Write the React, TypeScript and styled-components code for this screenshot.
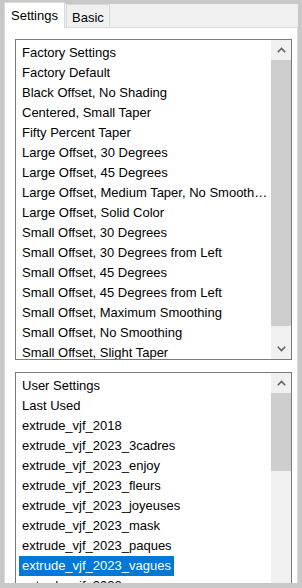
import React from "react";
import styled, { createGlobalStyle } from "styled-components";

const Global = createGlobalStyle`
  html, body { margin: 0; padding: 0; background: #c8c8c8; }
  body {
    width: 302px; height: 588px; overflow: hidden;
    font-family: "Liberation Sans", Arial, sans-serif; font-size: 13px; color: #000;
  }
`;

const Frame = styled.div`
  width: 302px; height: 588px; box-sizing: border-box;
  padding: 2px 4px 5px 4px; background: #c8c8c8;
  display: flex; flex-direction: column; overflow: hidden;
`;

const TabStrip = styled.div`
  display: flex; align-items: flex-end; height: 25px; flex: none;
  background: linear-gradient(to bottom, #c8c8c8 0 2px, #f0f0f0 2px);
  position: relative; z-index: 1;
`;

const Tab = styled.div<{ $active?: boolean }>`
  box-sizing: border-box;
  height: ${(p) => (p.$active ? "26px" : "23px")};
  margin-bottom: ${(p) => (p.$active ? "-1px" : "0")};
  padding: 0 ${(p) => (p.$active ? "6px" : "5px")};
  margin-left: ${(p) => (p.$active ? "0" : "1px")};
  background: ${(p) => (p.$active ? "#ffffff" : "#f0f0f0")};
  border: 1px solid #d9d9d9; border-bottom: none;
  display: flex; align-items: center;
  padding-top: ${(p) => (p.$active ? "0" : "3px")};
  font-size: 13px; line-height: 16px; color: #000; white-space: nowrap;
`;

const Panel = styled.div`
  flex: 1; min-height: 0; background: #ffffff;
  border: 1px solid #d9d9d9; border-bottom: none;
  padding: 11px 5px 0 10px;
  display: flex; flex-direction: column; gap: 12px; overflow: hidden;
`;

const ListBox = styled.div<{ $h: number }>`
  flex: none; height: ${(p) => p.$h}px; box-sizing: border-box;
  border: 1px solid #7a7a7a; background: #fff;
  display: flex;
`;

const Items = styled.div`
  flex: 1; min-width: 0; padding-top: 3px; overflow: hidden;
`;

const Row = styled.div`
  height: 20px; padding-left: 3px; display: flex; align-items: stretch;
  min-width: 0;
`;

const Label = styled.span<{ $sel?: boolean }>`
  display: block; padding: 0 3px; line-height: 20px; height: 20px;
  white-space: nowrap; overflow: hidden; text-overflow: ellipsis; min-width: 0;
  background: ${(p) => (p.$sel ? "#0078d7" : "transparent")};
  color: ${(p) => (p.$sel ? "#ffffff" : "#000000")};
`;

const ScrollBar = styled.div`
  flex: none; width: 20px; background: #f0f0f0;
  display: flex; flex-direction: column;
`;

const ArrowButton = styled.div`
  flex: none; height: 20px; display: flex; align-items: center; justify-content: center;
`;

const Track = styled.div`
  flex: 1; min-height: 0; display: flex; flex-direction: column;
`;

const Thumb = styled.div<{ $h: number }>`
  flex: none; height: ${(p) => p.$h}px; background: #cdcdcd;
`;

const Chevron = ({ up }: { up?: boolean }) => (
  <svg width="9" height="6" viewBox="0 0 9 6">
    <path
      d={up ? "M0.8 5.2 L4.5 1.5 L8.2 5.2" : "M0.8 0.8 L4.5 4.5 L8.2 0.8"}
      fill="none"
      stroke="#606060"
      strokeWidth="1.6"
    />
  </svg>
);

const factory = [
  "Factory Settings",
  "Factory Default",
  "Black Offset, No Shading",
  "Centered, Small Taper",
  "Fifty Percent Taper",
  "Large Offset, 30 Degrees",
  "Large Offset, 45 Degrees",
  "Large Offset, Medium Taper, No Smoothing",
  "Large Offset, Solid Color",
  "Small Offset, 30 Degrees",
  "Small Offset, 30 Degrees from Left",
  "Small Offset, 45 Degrees",
  "Small Offset, 45 Degrees from Left",
  "Small Offset, Maximum Smoothing",
  "Small Offset, No Smoothing",
  "Small Offset, Slight Taper",
];

const user = [
  "User Settings",
  "Last Used",
  "extrude_vjf_2018",
  "extrude_vjf_2023_3cadres",
  "extrude_vjf_2023_enjoy",
  "extrude_vjf_2023_fleurs",
  "extrude_vjf_2023_joyeuses",
  "extrude_vjf_2023_mask",
  "extrude_vjf_2023_paques",
  "extrude_vjf_2023_vagues",
  "extrude_vjf_2023_vacances",
];

export default function App() {
  return (
    <>
      <Global />
      <Frame>
        <TabStrip>
          <Tab $active>Settings</Tab>
          <Tab>Basic</Tab>
        </TabStrip>
        <Panel>
          <ListBox $h={321}>
            <Items>
              {factory.map((t) => (
                <Row key={t}>
                  <Label>{t}</Label>
                </Row>
              ))}
            </Items>
            <ScrollBar>
              <ArrowButton>
                <Chevron up />
              </ArrowButton>
              <Track>
                <Thumb $h={266} />
              </Track>
              <ArrowButton>
                <Chevron />
              </ArrowButton>
            </ScrollBar>
          </ListBox>
          <ListBox $h={260}>
            <Items>
              {user.map((t) => (
                <Row key={t}>
                  <Label $sel={t === "extrude_vjf_2023_vagues"}>{t}</Label>
                </Row>
              ))}
            </Items>
            <ScrollBar>
              <ArrowButton>
                <Chevron up />
              </ArrowButton>
              <Track>
                <Thumb $h={78} />
              </Track>
            </ScrollBar>
          </ListBox>
        </Panel>
      </Frame>
    </>
  );
}
